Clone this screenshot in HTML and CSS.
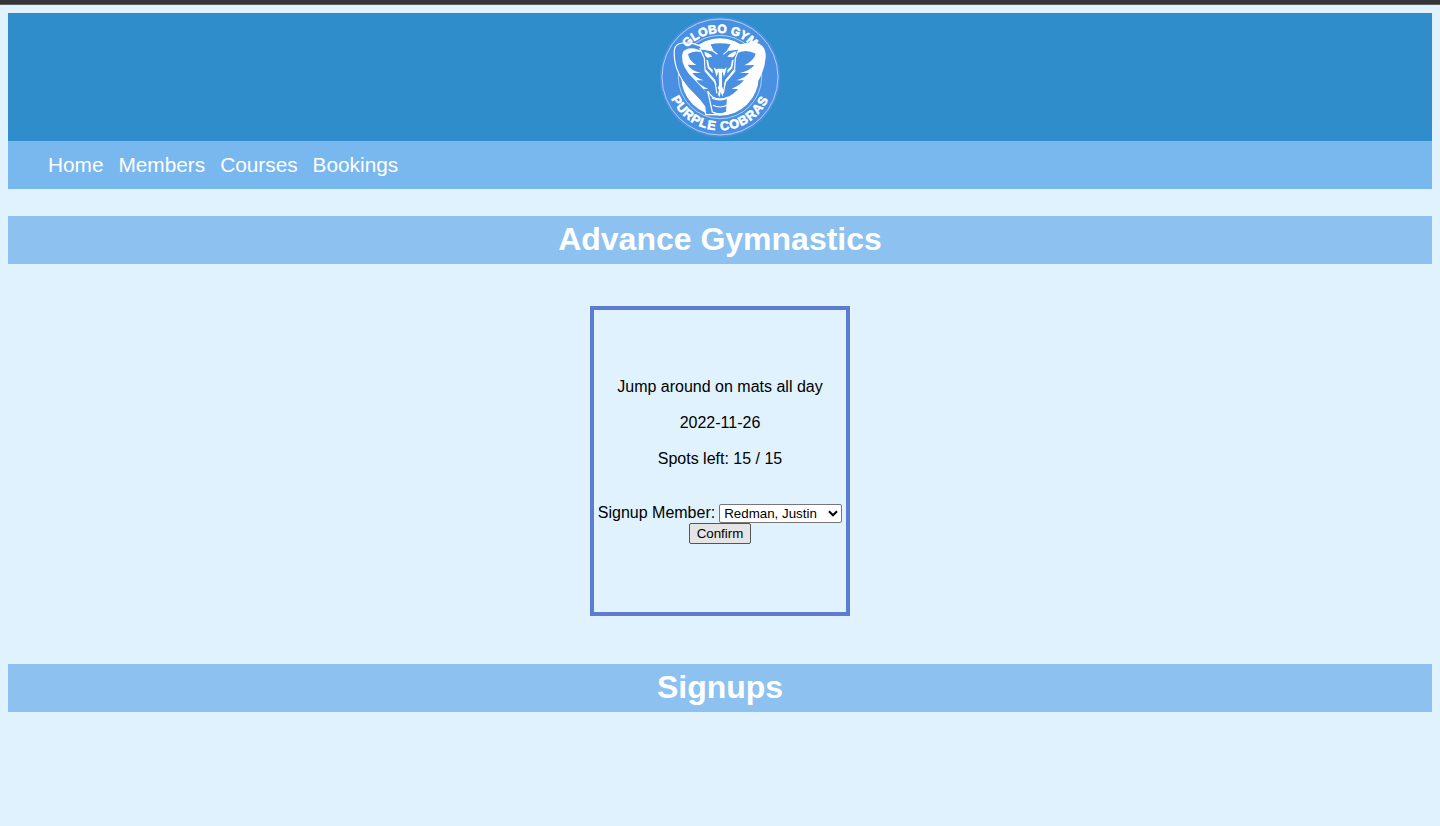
FILE: index.html
```html
<!DOCTYPE html>
<html lang="en">
<head>
<meta charset="utf-8">
<title>Globo Gym</title>
<link rel="stylesheet" href="styles.css">
</head>
<body>
<div class="top-strip"></div>
<div class="page">
  <header class="banner">
    <svg class="logo" viewBox="0 9 390 384" role="img" aria-label="Globo Gym Purple Cobras">
      <defs>
        <path id="arc-top" d="M62 202a133 133 0 0 1 266 0"/>
        <path id="arc-bottom" d="M47 140a160 160 0 1 0 296 0"/>
      </defs>
      <circle class="blue" cx="195" cy="201" r="180"/>
      <circle class="ring" cx="195" cy="201" r="174"/>
      <circle class="ring" cx="195" cy="201" r="125"/>
      <circle class="white" cx="195" cy="201" r="116"/>
      <!-- hood -->
      <path class="white" d="M245 107Q287 91 313 101Q334 113 332 143Q329 178 313 207Q292 238 259 257L221 314L205 255L235 180Z"/>
      <path class="blue outline" d="M152 314L149 290Q137 271 115 250Q79 216 65 175Q56 147 58 120Q61 101 82 99Q111 96 135 108L150 128L180 230L180 314Z"/>
      <path class="white" d="M152 129Q105 102 84 125Q73 151 100 190L136 228Q156 246 170 266L222 255L235 215L180 201Z"/>
      <!-- ribs -->
      <path class="blue" d="M150 131Q122 117 99 132Q102 152 124 165L98 164Q106 181 138 189L112 189Q122 204 146 211L124 211Q137 230 160 236L146 237Q157 253 173 262Q195 271 217 262Q235 253 250 238L230 236Q253 228 267 211L244 211Q269 205 282 189L255 189Q287 181 298 165L268 166Q298 150 302 131Q272 115 242 131L235 190L195 220L160 190Z"/>
      <!-- tail segments -->
      <path class="blue outline" d="M158 243Q166 256 174 262Q195 272 218 262L216 285L215 306Q195 317 172 306Z"/>
      <path class="seam" d="M170 264Q195 275 219 264M174 286Q195 296 216 286"/>
      <!-- head -->
      <path class="blue outline" d="M164 102Q195 94 230 102L222 121L252 117L241 145L239 178L212 211L207 232L185 232L179 211L150 178L148 145L135 116L172 122Z"/>
      <path class="blue" d="M177 225H214L209 256L183 256Z"/>
      <path class="seam" d="M164 103L175 124L187 133M229 103L216 124L205 133M149 181L180 217L186 250M241 181L211 217L205 250"/>
      <path class="white" d="M148 126Q163 128 172 140L157 143L150 136ZM245 124Q226 128 217 140L234 142L241 134Z"/>
      <path class="white" d="M154 149L159 151L163 170L173 180L173 190L158 174ZM236 149L231 151L227 170L217 180L217 190L232 174Z"/>
      <path class="white" d="M176 172L184 178L188 176H203L207 178L215 172L211 188L207 200L203 187H189L185 200L181 188Z"/>
      <path class="white" d="M191 185H201V229L205 239L203 260L197 246L194 262L189 254L192 240L188 233L192 226Z"/>
      <text class="logo-text top-text"><textPath href="#arc-top" startOffset="50%" text-anchor="middle">GLOBO GYM</textPath></text>
      <text class="logo-text bottom-text"><textPath href="#arc-bottom" startOffset="50%" text-anchor="middle">PURPLE COBRAS</textPath></text>
    </svg>
  </header>
  <nav class="nav">
    <a>Home</a><a>Members</a><a>Courses</a><a>Bookings</a>
  </nav>
  <h1 class="title">Advance Gymnastics</h1>
  <section class="card">
    <p>Jump around on mats all day</p>
    <p>2022-11-26</p>
    <p>Spots left: 15 / 15</p>
    <form class="signup">
      <div class="field">
        <label for="member">Signup Member:</label>
        <div class="select-wrap">
          <select class="member" id="member"><option>Redman, Justin</option></select>
          <svg class="chevron" viewBox="0 0 10 7"><path d="M1 1.3L5 5.3L9 1.3"/></svg>
        </div>
      </div>
      <button class="confirm" type="button">Confirm</button>
    </form>
  </section>
  <h1 class="title">Signups</h1>
</div>
</body>
</html>
```
FILE: styles.css
```css
body {
  margin: 0;
  background: #dff2fe;
  color: #000;
  font: 16px/18px "Liberation Sans", Arial, sans-serif;
}
.top-strip {
  height: 4px;
  background: #35363a;
  border-bottom: 1px solid #5f6064;
}
.page {
  padding: 8px;
}
.banner {
  display: flex;
  justify-content: center;
  height: 128px;
  background: #308dcb;
}
.logo {
  width: 130px;
  height: 128px;
}
.blue { fill: #4a90e2; }
.white { fill: #fff; }
.ring { fill: none; stroke: #c7dcf6; stroke-width: 2.5; }
.outline { stroke: #fff; stroke-width: 3.5; }
.seam { fill: none; stroke: #fff; stroke-width: 3.5; }
.logo-text {
  fill: #fff;
  font: bold 36px "Liberation Sans", Arial, sans-serif;
  stroke: #fff;
  stroke-width: 1.8;
}
.bottom-text {
  font-size: 38px;
  letter-spacing: 3px;
}
.nav {
  display: flex;
  gap: 15px;
  height: 48px;
  padding-left: 40px;
  background: #79b7ef;
  color: #fff;
  font-size: 20.8px;
  line-height: 48px;
}
.title {
  height: 48px;
  margin: 27px 0 0;
  background: #8dc1f0;
  color: #fff;
  font-size: 32px;
  line-height: 46px;
  text-align: center;
}
.card {
  display: flex;
  flex-direction: column;
  align-items: center;
  justify-content: center;
  gap: 18px;
  box-sizing: border-box;
  width: 260px;
  height: 310px;
  margin: 42px auto 48px;
  border: 4px solid #5d7bd0;
}
.card p {
  margin: 0;
}
.signup {
  display: flex;
  flex-direction: column;
  align-items: center;
  margin-top: 18px;
}
.field {
  display: flex;
  gap: 4px;
  height: 19px;
}
.select-wrap {
  position: relative;
  width: 123px;
}
.member {
  appearance: none;
  box-sizing: border-box;
  width: 123px;
  height: 19px;
  display: block;
  margin: 0;
  padding: 0 4px;
  border: 1px solid #767676;
  border-radius: 2px;
  background: #fff;
  color: #000;
  font: 13.333px/17px "Liberation Sans", Arial, sans-serif;
}
.chevron {
  position: absolute;
  right: 4px;
  top: 6px;
  width: 10px;
  height: 7px;
  fill: none;
  stroke: #000;
  stroke-width: 2;
}
.confirm {
  box-sizing: border-box;
  width: 62px;
  height: 21px;
  padding: 0;
  border: 1px solid #555;
  border-radius: 2px;
  background: #e5e5e5;
  color: #000;
  font: 13.333px/17px "Liberation Sans", Arial, sans-serif;
}
```
